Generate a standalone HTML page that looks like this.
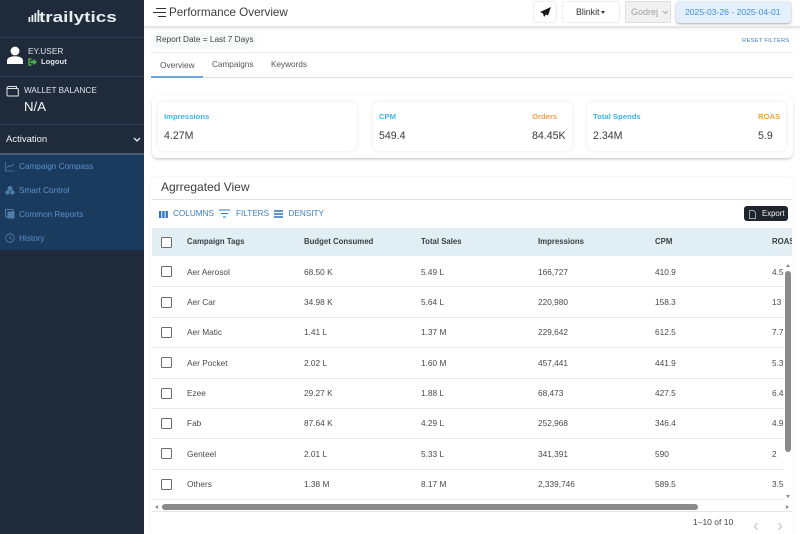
<!DOCTYPE html>
<html><head><meta charset="utf-8">
<style>
*{box-sizing:border-box}
html,body{margin:0;padding:0;width:800px;height:534px;overflow:hidden;background:#fff;font-family:"Liberation Sans",sans-serif;color:#333}
.a{position:absolute;white-space:nowrap}
.line{position:absolute;height:1px}
.h{font-size:7.8px;font-weight:700;color:#3a3f45;top:237px}
.c{font-size:8.300px;color:#4a4a4a;margin-top:-.5px}
.cb{position:absolute;left:161px;width:11px;height:11px;border:1.500px solid #6b6b6b;border-radius:1.500px;background:#fff}
.card{position:absolute;top:102px;height:49px;background:#fff;border-radius:6px;box-shadow:0 0 5px rgba(0,0,0,.09)}
.lbl{font-size:7.700px;font-weight:700;top:112px}
.val{font-size:10.600px;color:#3a3a3a;top:130px}
.nav{font-size:8.200px;color:#5b93cc;left:19px}
</style></head><body>
<!-- sidebar -->
<div class="a" style="left:0;top:0;width:144px;height:534px;background:#1f2b3a"></div>
<svg class="a" style="left:27px;top:9px" width="13" height="15" viewBox="0 0 13 15"><g fill="#e8edf2"><rect x="1.500" y="8" width="1.800" height="5"/><rect x="4.500" y="6" width="1.800" height="7"/><rect x="7.500" y="4" width="1.800" height="9"/><rect x="10.500" y="1" width="1.800" height="12"/></g></svg>
<div class="a" style="left:39px;top:9px;font-size:15px;font-weight:700;color:#e8edf2;transform:scaleX(1.26);transform-origin:0 0">trailytics</div>
<div class="line" style="left:0;top:37px;width:144px;background:#2c3b4e"></div>
<svg class="a" style="left:7px;top:46px" width="16" height="19" viewBox="0 0 16 19"><circle cx="8" cy="5" r="4.400" fill="#fff"/><path d="M0 18v-3c0-3 3-4.700 8-4.700s8 1.700 8 4.700v3z" fill="#fff"/></svg>
<div class="a" style="left:28px;top:46px;font-size:8.300px;color:#dfe4ea">EY.USER</div>
<svg class="a" style="left:28px;top:58px" width="9" height="8" viewBox="0 0 9 8"><path d="M3.500 1H1v6h2.500" fill="none" stroke="#4caf50" stroke-width="1.400"/><path d="M2.500 2.800h3V.8L9 4 5.500 7.200v-2h-3z" fill="#4caf50"/></svg>
<div class="a" style="left:41px;top:57px;font-size:7.600px;font-weight:700;color:#dfe4ea">Logout</div>
<div class="line" style="left:0;top:76px;width:144px;background:#2c3b4e"></div>
<svg class="a" style="left:6px;top:85px" width="13" height="12" viewBox="0 0 13 12"><path d="M1 3.500C1 2 2 1.500 3 1.500h7.500v2M1 3.500v6.500c0 .6.400 1 1 1h9.500c.4 0 .8-.4.800-.8V4.300c0-.5-.4-.8-.8-.8H1z" fill="none" stroke="#dfe4ea" stroke-width="1"/></svg>
<div class="a" style="left:24px;top:86px;font-size:8.200px;color:#dfe4ea">WALLET BALANCE</div>
<div class="a" style="left:24px;top:99px;font-size:13.200px;color:#f2f5f8">N/A</div>
<div class="line" style="left:0;top:124px;width:144px;background:#2c3b4e"></div>
<div class="a" style="left:6px;top:134px;font-size:9.500px;color:#f0f3f6">Activation</div>
<svg class="a" style="left:133px;top:137px" width="8" height="6" viewBox="0 0 8 6"><path d="M1 1l3 3 3-3" fill="none" stroke="#e8edf2" stroke-width="1.300"/></svg>
<div class="a" style="left:0;top:153px;width:144px;height:97px;background:#1a3a5e;border-top:2px solid #4a6075"></div>
<svg class="a" style="left:5px;top:161px" width="10" height="11" viewBox="0 0 10 11"><path d="M.5 1v9h9M2 7l2-2.500 1.500 1.200L9 3" fill="none" stroke="#4f7ea9" stroke-width=".8"/></svg>
<div class="a nav" style="top:162px">Campaign Compass</div>
<svg class="a" style="left:5px;top:185px" width="10" height="11" viewBox="0 0 10 11"><circle cx="5" cy="3.500" r="2.500" fill="#4f7ea9"/><circle cx="2.500" cy="7.500" r="2.200" fill="#4f7ea9"/><circle cx="7.500" cy="7.500" r="2.200" fill="#4f7ea9"/></svg>
<div class="a nav" style="top:186px">Smart Control</div>
<svg class="a" style="left:5px;top:209px" width="10" height="10" viewBox="0 0 10 10"><rect x=".5" y=".5" width="7.500" height="7.500" fill="none" stroke="#4f7ea9"/><rect x="2.500" y="2.500" width="7" height="7" fill="#4f7ea9"/></svg>
<div class="a nav" style="top:210px">Common Reports</div>
<svg class="a" style="left:5px;top:233px" width="10" height="10" viewBox="0 0 10 10"><circle cx="5" cy="5" r="4.300" fill="none" stroke="#4f7ea9" stroke-width=".8"/><path d="M5 2.500V5l2 1.500" fill="none" stroke="#4f7ea9" stroke-width=".8"/></svg>
<div class="a nav" style="top:234px">History</div>

<!-- top bar -->
<svg class="a" style="left:153px;top:7px" width="13" height="11" viewBox="0 0 13 11"><path d="M3 1.500h10M0 5.500h13M5 9.500h8" stroke="#333" stroke-width="1.100"/></svg>
<div class="a" style="left:169px;top:5.500px;font-size:11.700px;color:#3d3d3d">Performance Overview</div>
<div class="a" style="left:144px;top:26px;width:656px;height:2px;background:#e6e6e6;box-shadow:0 1px 2px rgba(0,0,0,.08)"></div>
<div class="a" style="left:533px;top:1px;width:24px;height:22px;background:#fff;border:1px solid #eee;border-radius:3px"></div>
<svg class="a" style="left:540px;top:7px" width="11" height="10" viewBox="0 0 11 10"><path d="M11 0L0 5l3 1.500L4 10l2-2.500 2 1z" fill="#1c1c1c"/></svg>
<div class="a" style="left:562px;top:1px;width:58px;height:22px;background:#fff;border:1px solid #eee;border-radius:3px"></div>
<div class="a" style="left:576px;top:7px;font-size:8.800px;color:#333">Blinkit</div>
<div class="a" style="left:601px;top:10.500px;width:0;height:0;border-left:2.500px solid transparent;border-right:2.500px solid transparent;border-top:3px solid #333"></div>
<div class="a" style="left:625px;top:1px;width:46px;height:22px;background:#f1f1f1;border:1px solid #ddd;border-radius:2px"></div>
<div class="a" style="left:631px;top:7px;font-size:9px;color:#a0a0a0">Godrej</div>
<svg class="a" style="left:662px;top:10px" width="7" height="5" viewBox="0 0 7 5"><path d="M1 1l2.500 2.500L6 1" fill="none" stroke="#aaa"/></svg>
<div class="a" style="left:676px;top:1px;width:115px;height:22px;background:#e3f0fc;border-radius:3px;box-shadow:0 1px 2px rgba(0,0,0,.35)"></div>
<div class="a" style="left:685px;top:6.500px;font-size:8.600px;color:#3f8fd8">2025-03-26 - 2025-04-01</div>

<!-- filter row -->
<div class="a" style="left:151px;top:32px;width:106px;height:17px;background:#f7f8fa;border-radius:8px"></div>
<div class="a" style="left:156px;top:35px;font-size:8.250px;color:#444">Report Date = Last 7 Days</div>
<div class="a" style="left:742px;top:37px;font-size:5.900px;color:#3f7fc4;letter-spacing:.2px;margin-top:1px">RESET FILTERS</div>
<div class="line" style="left:151px;top:52px;width:642px;background:#eee"></div>
<div class="a" style="left:160px;top:59.500px;font-size:8.300px;color:#555">Overview</div>
<div class="a" style="left:212px;top:60px;font-size:8.200px;color:#555">Campaigns</div>
<div class="a" style="left:271px;top:60px;font-size:8.200px;color:#555">Keywords</div>
<div class="line" style="left:151px;top:77px;width:642px;background:#e0e0e0"></div>
<div class="a" style="left:151px;top:76px;width:52px;height:2px;background:#6ea6dc"></div>

<!-- KPI panel -->
<div class="a" style="left:152px;top:96px;width:641px;height:62px;background:#fff;border-radius:6px;box-shadow:0 2px 3px -1px rgba(0,0,0,.25),0 0 2px rgba(0,0,0,.06)"></div>
<div class="card" style="left:158px;width:199px"></div>
<div class="card" style="left:373px;width:199px"></div>
<div class="card" style="left:587px;width:199px"></div>
<div class="a lbl" style="left:164px;color:#3cb7ec">Impressions</div>
<div class="a val" style="left:164px">4.27M</div>
<div class="a lbl" style="left:379px;color:#3cb7ec">CPM</div>
<div class="a val" style="left:379px">549.4</div>
<div class="a lbl" style="left:532px;color:#f0a04e">Orders</div>
<div class="a val" style="left:532px">84.45K</div>
<div class="a lbl" style="left:593px;color:#3cb7ec">Total Spends</div>
<div class="a val" style="left:593px">2.34M</div>
<div class="a lbl" style="left:758px;color:#f0a04e">ROAS</div>
<div class="a val" style="left:758px">5.9</div>

<!-- table card -->
<div class="a" style="left:151px;top:177px;width:642px;height:357px;background:#fff;border-radius:4px 4px 0 0;box-shadow:0 0 3px rgba(0,0,0,.08)"></div>
<div class="a" style="left:161px;top:180px;font-size:12px;color:#3d3d3d">Agrregated View</div>
<div class="line" style="left:152px;top:199px;width:640px;height:1px;background:#e2e2e2"></div>
<svg class="a" style="left:159px;top:211px" width="9" height="7" viewBox="0 0 9 7"><g fill="#2f74c0"><rect width="2.300" height="7"/><rect x="3.300" width="2.300" height="7"/><rect x="6.600" width="2.300" height="7"/></g></svg>
<div class="a" style="left:173px;top:209px;font-size:8.200px;color:#3f7fc4">COLUMNS</div>
<svg class="a" style="left:219px;top:209px" width="11" height="9" viewBox="0 0 11 9"><path d="M0 1h11M2 4.500h7M4 8h3" stroke="#2f74c0" stroke-width="1.100"/></svg>
<div class="a" style="left:236px;top:209px;font-size:8.200px;color:#3f7fc4">FILTERS</div>
<svg class="a" style="left:274px;top:210px" width="9" height="8" viewBox="0 0 9 8"><path d="M0 1h9M0 4h9M0 7h9" stroke="#2f74c0" stroke-width="1.400"/></svg>
<div class="a" style="left:288.500px;top:209px;font-size:8.200px;color:#3f7fc4">DENSITY</div>
<div class="a" style="left:744px;top:206px;width:44px;height:15px;background:#20252d;border-radius:3px"></div>
<svg class="a" style="left:749px;top:210px" width="7" height="9" viewBox="0 0 7 9"><path d="M.5.500h4l2 2v6h-6z" fill="none" stroke="#cfd3d8" stroke-width=".7"/></svg>
<div class="a" style="left:762px;top:209px;font-size:7.800px;color:#f0f0f0">Export</div>

<!-- table header -->
<div class="a" style="left:152px;top:228px;width:640px;height:28px;background:#e1eff5"></div>
<div class="cb" style="top:237px"></div>
<div class="a h" style="left:187px">Campaign Tags</div>
<div class="a h" style="left:304px">Budget Consumed</div>
<div class="a h" style="left:421px">Total Sales</div>
<div class="a h" style="left:538px">Impressions</div>
<div class="a h" style="left:655px">CPM</div>
<div class="a h" style="left:772px;width:20px;overflow:hidden">ROAS</div>

<!-- rows -->
<div class="cb" style="top:266px"></div><div class="a c" style="left:187px;top:267px">Aer Aerosol</div><div class="a c" style="left:304px;top:267px">68.50 K</div><div class="a c" style="left:421px;top:267px">5.49 L</div><div class="a c" style="left:538px;top:267px">166,727</div><div class="a c" style="left:655px;top:267px">410.9</div><div class="a c" style="left:772px;top:267px">4.5</div>
<div class="line" style="left:152px;top:286px;width:632px;background:#eaeaea"></div>
<div class="cb" style="top:297px"></div><div class="a c" style="left:187px;top:297px">Aer Car</div><div class="a c" style="left:304px;top:297px">34.98 K</div><div class="a c" style="left:421px;top:297px">5.64 L</div><div class="a c" style="left:538px;top:297px">220,980</div><div class="a c" style="left:655px;top:297px">158.3</div><div class="a c" style="left:772px;top:297px">13</div>
<div class="line" style="left:152px;top:317px;width:632px;background:#eaeaea"></div>
<div class="cb" style="top:327px"></div><div class="a c" style="left:187px;top:327px">Aer Matic</div><div class="a c" style="left:304px;top:327px">1.41 L</div><div class="a c" style="left:421px;top:327px">1.37 M</div><div class="a c" style="left:538px;top:327px">229,642</div><div class="a c" style="left:655px;top:327px">612.5</div><div class="a c" style="left:772px;top:327px">7.7</div>
<div class="line" style="left:152px;top:347px;width:632px;background:#eaeaea"></div>
<div class="cb" style="top:357px"></div><div class="a c" style="left:187px;top:358px">Aer Pocket</div><div class="a c" style="left:304px;top:358px">2.02 L</div><div class="a c" style="left:421px;top:358px">1.60 M</div><div class="a c" style="left:538px;top:358px">457,441</div><div class="a c" style="left:655px;top:358px">441.9</div><div class="a c" style="left:772px;top:358px">5.3</div>
<div class="line" style="left:152px;top:378px;width:632px;background:#eaeaea"></div>
<div class="cb" style="top:388px"></div><div class="a c" style="left:187px;top:388px">Ezee</div><div class="a c" style="left:304px;top:388px">29.27 K</div><div class="a c" style="left:421px;top:388px">1.88 L</div><div class="a c" style="left:538px;top:388px">68,473</div><div class="a c" style="left:655px;top:388px">427.5</div><div class="a c" style="left:772px;top:388px">6.4</div>
<div class="line" style="left:152px;top:408px;width:632px;background:#eaeaea"></div>
<div class="cb" style="top:418px"></div><div class="a c" style="left:187px;top:418px">Fab</div><div class="a c" style="left:304px;top:418px">87.64 K</div><div class="a c" style="left:421px;top:418px">4.29 L</div><div class="a c" style="left:538px;top:418px">252,968</div><div class="a c" style="left:655px;top:418px">346.4</div><div class="a c" style="left:772px;top:418px">4.9</div>
<div class="line" style="left:152px;top:438px;width:632px;background:#eaeaea"></div>
<div class="cb" style="top:448px"></div><div class="a c" style="left:187px;top:449px">Genteel</div><div class="a c" style="left:304px;top:449px">2.01 L</div><div class="a c" style="left:421px;top:449px">5.33 L</div><div class="a c" style="left:538px;top:449px">341,391</div><div class="a c" style="left:655px;top:449px">590</div><div class="a c" style="left:772px;top:449px">2</div>
<div class="line" style="left:152px;top:469px;width:632px;background:#eaeaea"></div>
<div class="cb" style="top:479px"></div><div class="a c" style="left:187px;top:479px">Others</div><div class="a c" style="left:304px;top:479px">1.38 M</div><div class="a c" style="left:421px;top:479px">8.17 M</div><div class="a c" style="left:538px;top:479px">2,339,746</div><div class="a c" style="left:655px;top:479px">589.5</div><div class="a c" style="left:772px;top:479px">3.5</div>
<div class="line" style="left:152px;top:499px;width:632px;background:#eaeaea"></div>

<!-- scrollbars -->
<div class="a" style="left:785px;top:271px;width:6px;height:181px;background:#8a8a8a;border-radius:3px"></div>
<div class="a" style="left:786px;top:264px;width:0;height:0;border-left:2.500px solid transparent;border-right:2.500px solid transparent;border-bottom:3px solid #888"></div>
<div class="a" style="left:786px;top:495px;width:0;height:0;border-left:2.500px solid transparent;border-right:2.500px solid transparent;border-top:3px solid #888"></div>
<div class="a" style="left:162px;top:504px;width:536px;height:6px;background:#8a8a8a;border-radius:3px"></div>
<div class="a" style="left:155px;top:504.500px;width:0;height:0;border-top:2.500px solid transparent;border-bottom:2.500px solid transparent;border-right:3px solid #888"></div>
<div class="a" style="left:786px;top:504.500px;width:0;height:0;border-top:2.500px solid transparent;border-bottom:2.500px solid transparent;border-left:3px solid #888"></div>
<div class="line" style="left:152px;top:511px;width:640px;background:#e4e4e4"></div>

<!-- footer -->
<div class="a" style="left:693px;top:517px;font-size:8.500px;color:#444">1–10 of 10</div>
<svg class="a" style="left:753px;top:522px" width="6" height="9" viewBox="0 0 6 9"><path d="M4.500 1L1.500 4.500l3 3.500" fill="none" stroke="#bdbdbd" stroke-width="1"/></svg>
<svg class="a" style="left:777px;top:522px" width="6" height="9" viewBox="0 0 6 9"><path d="M1.500 1l3 3.500-3 3.500" fill="none" stroke="#bdbdbd" stroke-width="1"/></svg>
</body></html>
